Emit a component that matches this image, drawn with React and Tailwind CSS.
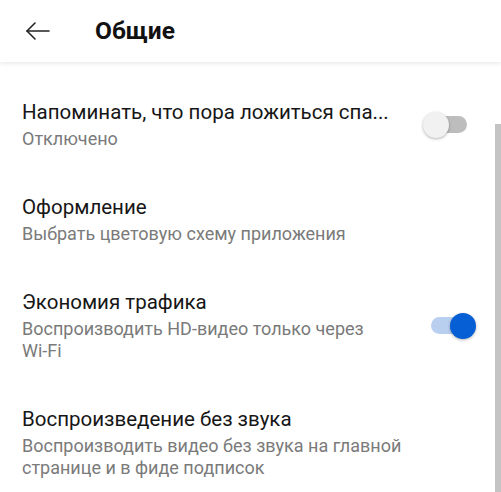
const Toggle = ({ on }) => {
  return (
    <div className="relative w-[53px] h-[26px] shrink-0 ml-auto">
      <div
        className={
          'absolute left-[8px] top-[4px] w-[36px] h-[17px] rounded-full ' +
          (on ? 'bg-[#b9cff0]' : 'bg-[#bdbdbd]')
        }
      />
      <div
        className={
          'absolute top-0 w-[26px] h-[26px] rounded-full shadow-[0_1px_3px_rgba(0,0,0,0.3)] ' +
          (on ? 'left-[27px] bg-[#065fd4]' : 'left-0 bg-[#f1f1f1]')
        }
      />
    </div>
  )
}

const SettingRow = ({ title, subtitle, toggle }) => {
  return (
    <div className="flex items-center py-[22px] pl-[22px] pr-[25px]">
      <div className="w-[382px] shrink-0">
        <div className="text-[20.5px] leading-[26px] text-[#161616] whitespace-nowrap">{title}</div>
        <div className="mt-[3px] text-[18px] leading-[22px] text-[#7a7a7a]">{subtitle}</div>
      </div>
      {toggle !== undefined && <Toggle on={toggle} />}
    </div>
  )
}

export default function App() {
  return (
    <div className="relative w-[501px] h-[492px] overflow-hidden bg-white font-['Roboto','Liberation_Sans',sans-serif]">
      {/* Header */}
      <div className="relative z-10 h-[62px] flex items-center bg-white shadow-[0_2px_4px_rgba(0,0,0,0.08)]">
        <svg className="ml-[25px] w-[25px] h-[20px]" viewBox="0 0 25 20" fill="none" stroke="#222" strokeWidth="1.6" strokeLinecap="round" strokeLinejoin="round">
          <path d="M24 10H2" />
          <path d="M10 2L2 10L10 18" />
        </svg>
        <h1 className="ml-[45px] text-[24.5px] font-bold text-[#111]">Общие</h1>
      </div>

      {/* Settings list */}
      <div className="pt-[15px]">
        <SettingRow
          title="Напоминать, что пора ложиться спа..."
          subtitle="Отключено"
          toggle={false}
        />
        <SettingRow title="Оформление" subtitle="Выбрать цветовую схему приложения" />
        <SettingRow
          title="Экономия трафика"
          subtitle={
            <>
              Воспроизводить HD-видео только через <span className="whitespace-nowrap">Wi-Fi</span>
            </>
          }
          toggle={true}
        />
        <SettingRow
          title="Воспроизведение без звука"
          subtitle="Воспроизводить видео без звука на главной странице и в фиде подписок"
        />
      </div>

      {/* Scrollbar */}
      <div className="absolute right-0 top-[124px] bottom-0 w-[6px] bg-[#c4c4c4]" />
    </div>
  )
}
